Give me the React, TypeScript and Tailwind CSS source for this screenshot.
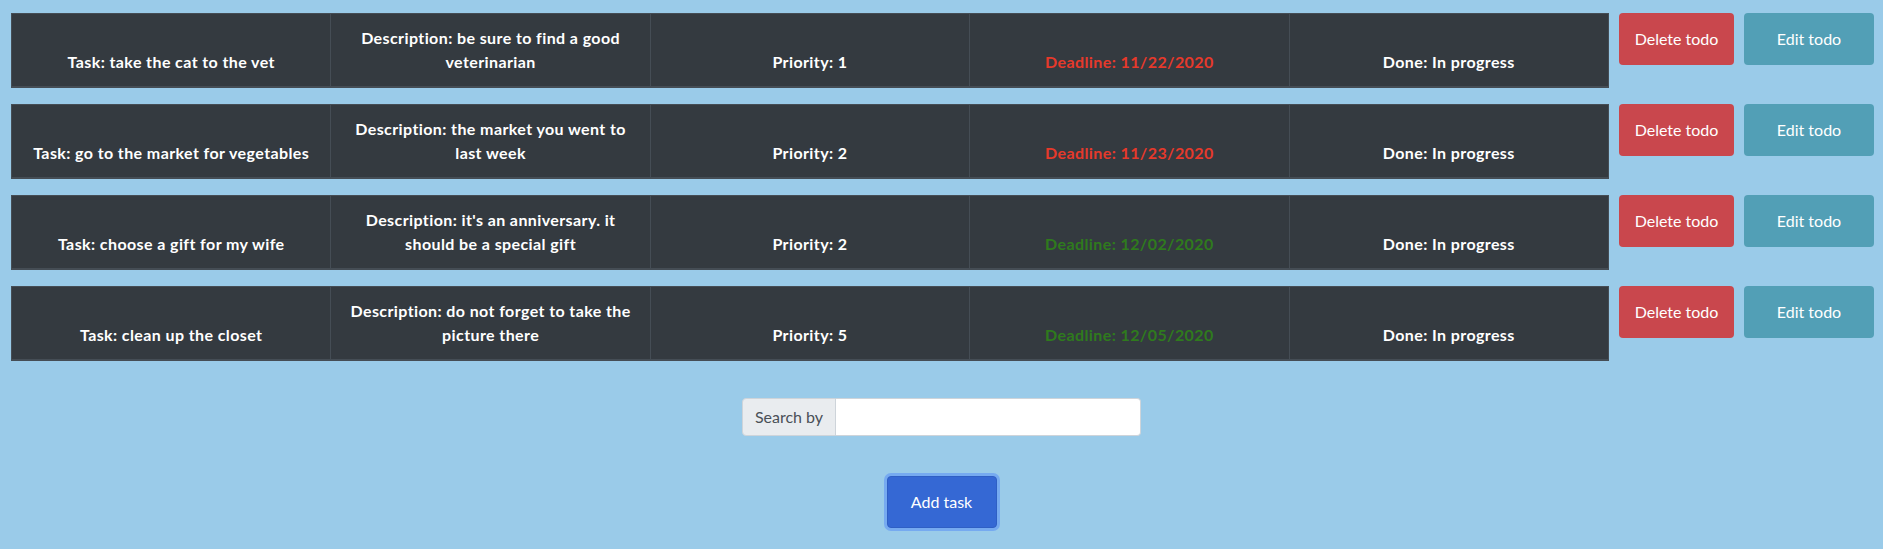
import React from 'react';

interface Todo {
  task: string;
  description: string;
  priority: number;
  deadline: string;
  overdue: boolean;
  done: string;
}

const TODOS: Todo[] = [
  {
    task: 'take the cat to the vet',
    description: 'be sure to find a good veterinarian',
    priority: 1,
    deadline: '11/22/2020',
    overdue: true,
    done: 'In progress',
  },
  {
    task: 'go to the market for vegetables',
    description: 'the market you went to last week',
    priority: 2,
    deadline: '11/23/2020',
    overdue: true,
    done: 'In progress',
  },
  {
    task: 'choose a gift for my wife',
    description: "it's an anniversary. it should be a special gift",
    priority: 2,
    deadline: '12/02/2020',
    overdue: false,
    done: 'In progress',
  },
  {
    task: 'clean up the closet',
    description: 'do not forget to take the picture there',
    priority: 5,
    deadline: '12/05/2020',
    overdue: false,
    done: 'In progress',
  },
];

const cell =
  'border-x border-b-2 border-[#454d55] px-3 py-3 align-bottom text-center font-bold leading-6 tracking-[0.025em]';

export default function App() {
  return (
    <div className="min-h-screen bg-[#9acbe9] pt-[13px] text-base font-['Segoe_UI',Lato,sans-serif]">
      {/* Todo rows */}
      {TODOS.map((todo) => (
        <div key={todo.task} className="flex items-start ml-[11px] mr-[9px] mb-4">
          <div className="flex-1 min-w-0">
            <table className="w-full table-fixed border-collapse border border-[#454d55] bg-[#343a40] text-white">
              <thead>
                <tr>
                  <th className={cell}>Task: {todo.task}</th>
                  <th className={cell}>Description: {todo.description}</th>
                  <th className={cell}>Priority: {todo.priority}</th>
                  <th
                    className={`${cell} ${
                      todo.overdue ? 'text-[#e6392b]' : 'text-[#2f7a1d]'
                    }`}
                  >
                    Deadline: {todo.deadline}
                  </th>
                  <th className={cell}>Done: {todo.done}</th>
                </tr>
              </thead>
            </table>
          </div>
          <button className="ml-[10px] w-[115px] h-[52px] rounded bg-[#c9474d] text-white leading-6">
            Delete todo
          </button>
          <button className="ml-[10px] w-[130px] h-[52px] rounded bg-[#529fb6] text-white leading-6">
            Edit todo
          </button>
        </div>
      ))}

      {/* Search */}
      <div className="flex justify-center mt-[37px]">
        <div className="flex w-[399px] h-[38px]">
          <span className="flex items-center justify-center w-[94px] whitespace-nowrap bg-[#e9ecef] border border-[#ced4da] rounded-l text-[#495057] leading-6">
            Search by
          </span>
          <input
            type="text"
            className="flex-1 min-w-0 bg-white border border-l-0 border-[#ced4da] rounded-r px-3 outline-none"
          />
        </div>
      </div>

      {/* Add task */}
      <div className="flex justify-center mt-10">
        <button className="w-[110px] h-[52px] rounded bg-[#3568d4] text-white leading-6 border border-[#2f5fc4] ring-[3px] ring-[#76aaf0]">
          Add task
        </button>
      </div>
    </div>
  );
}
